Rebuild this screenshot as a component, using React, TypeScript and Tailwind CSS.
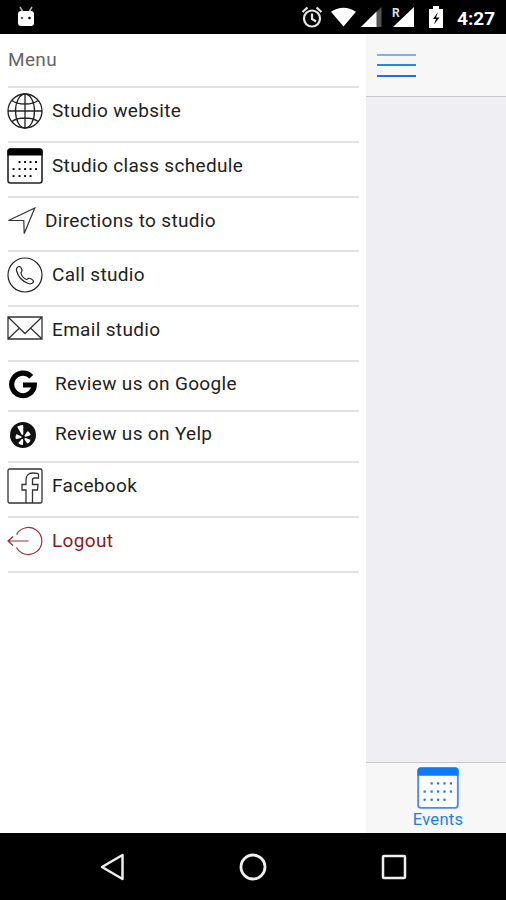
import React from "react";
import { FaYelp } from "react-icons/fa";

function GlobeIcon() {
  return (
    <svg width="36" height="36" viewBox="0 0 36 36" fill="none" stroke="#222" strokeWidth="1.3">
      <circle cx="18" cy="18" r="17" />
      <ellipse cx="18" cy="18" rx="9.5" ry="17" />
      <path d="M18 1v34M1 18h34M5 7.5c3 2.5 8 3.5 13 3.5s10-1 13-3.5M5 28.5c3-2.5 8-3.5 13-3.5s10 1 13 3.5" />
    </svg>
  );
}

const dots = [
  [12.5, 14], [18, 14], [23.5, 14], [29, 14],
  [6.5, 21], [12.5, 21], [18, 21], [23.5, 21], [29, 21],
  [6.5, 28], [12.5, 28], [18, 28], [23.5, 28],
];

function CalendarIcon({ size, color, border }: { size: number; color: string; border: string }) {
  return (
    <svg width={size} height={size} viewBox="0 0 36 36" fill="none">
      <rect x="1" y="1" width="34" height="34" rx="2.5" fill="#fff" stroke={border} strokeWidth="1.6" />
      <path d="M.5 7.5V3Q.5.5 3 .5h30q2.5 0 2.5 2.5v4.5z" fill={color} />
      {dots.map(([x, y]) => (
        <rect key={`${x}-${y}`} x={x - 0.9} y={y - 0.9} width="1.9" height="1.9" fill={color} />
      ))}
    </svg>
  );
}

function DirectionsIcon() {
  return (
    <svg width="29" height="28" viewBox="0 0 29 28" fill="none" stroke="#333" strokeWidth="1.2">
      <path d="M1.5 13.5L27.8 1 17.2 26.5l-.4-13z" />
    </svg>
  );
}

function PhoneIcon() {
  return (
    <svg width="36" height="36" viewBox="0 0 36 36" fill="none" stroke="#222" strokeWidth="1.2">
      <circle cx="18" cy="18" r="17" />
      <path d="M12 9.5c-1.5.3-3 2-2.5 4 1.5 6 6 11 12 13 2 .7 4.5 0 5-2 .2-1.5-3.5-3.5-5-3.2-1 .2-1 1.5-2 1.2-2.5-1-5-4-5.500-6.500-.2-1.200 1.400-1.300 1-3-.4-1.500-1.700-3.600-3-3.500z" />
    </svg>
  );
}

function MailIcon() {
  return (
    <svg width="36" height="24" viewBox="0 0 36 24" fill="none" stroke="#333" strokeWidth="1.3">
      <path d="M1 1h34v22H1zM1 1l17 16.5L35 1M1 23l11.500-11M35 23L23.500 12" />
    </svg>
  );
}

function GoogleIcon() {
  return (
    <svg width="30" height="30" viewBox="0 0 30 30" fill="none" stroke="#000" strokeWidth="5.2">
      <path d="M24.3 6.7A11.3 11.3 0 1 0 27.3 15H16" />
    </svg>
  );
}

function YelpIcon() {
  return (
    <span className="flex h-[26px] w-[26px] items-center justify-center rounded-full bg-[#111]">
      <FaYelp size={20} color="#fff" />
    </span>
  );
}

function FacebookIcon() {
  return (
    <svg width="36" height="36" viewBox="0 0 36 36" fill="none" stroke="#333" strokeWidth="1.3">
      <rect x="1" y="1" width="34" height="34" rx="1.5" />
      <path d="M19 35V22h-4v-5.500h4V12c0-4 2.500-7 6.500-7 2.500 0 6 0 6 1.500V10h-4c-1.500 0-2 .7-2 2v4.500h5.500L30.500 22h-5v13" />
    </svg>
  );
}

function LogoutIcon() {
  return (
    <svg width="36" height="30" viewBox="0 0 36 30" fill="none" stroke="#a02a2d" strokeWidth="1.2">
      <path d="M9.500 8.500a13.500 13.500 0 1 1 0 13M1 15h20.500M6 10.500L1 15l5 4.500" />
    </svg>
  );
}

const items = [
  { label: "Studio website", icon: <GlobeIcon />, row: "h-[55px]", slot: "w-[45px]", text: "" },
  { label: "Studio class schedule", icon: <CalendarIcon size={36} color="#000" border="#222" />, row: "h-[55px]", slot: "w-[45px]", text: "" },
  { label: "Directions to studio", icon: <DirectionsIcon />, row: "h-[54px]", slot: "w-[38px]", text: "" },
  { label: "Call studio", icon: <PhoneIcon />, row: "h-[55px]", slot: "w-[45px]", text: "pt-px" },
  { label: "Email studio", icon: <MailIcon />, row: "h-[55px]", slot: "w-[45px] pb-1", text: "" },
  { label: "Review us on Google", icon: <GoogleIcon />, row: "h-[50px]", slot: "w-12", text: "pb-0.5" },
  { label: "Review us on Yelp", icon: <YelpIcon />, row: "h-[51px]", slot: "w-12 pl-[3px]", text: "pb-0.5" },
  { label: "Facebook", icon: <FacebookIcon />, row: "h-[55px]", slot: "w-[45px]", text: "" },
  { label: "Logout", icon: <LogoutIcon />, row: "h-[55px]", slot: "w-[45px]", text: "text-[#8b1a1c]" },
];

function StatusBar() {
  return (
    <header className="flex h-[34px] shrink-0 items-center bg-black text-white">
      <svg className="ml-[17px]" width="18" height="22" viewBox="0 0 18 22" fill="#fff">
        <path d="M3 1l3 5M15 1l-3 5" stroke="#bbb" strokeWidth="1.5" />
        <path d="M1 8q0-3 3-3h10q3 0 3 3v9q0 3-3 3H4q-3 0-3-3z" />
        <circle cx="5" cy="12" r="1.3" fill="#666" />
        <circle cx="12.5" cy="12" r="1.3" fill="#000" />
      </svg>
      <svg className="ml-[266px]" width="22" height="22" viewBox="0 0 22 22" fill="none" stroke="#e8e8e8" strokeWidth="2.2">
        <circle cx="11" cy="12.5" r="8" />
        <path d="M1.500 6l5-4.500M20.500 6l-5-4.500M11 7.500v5.500l4 2.500" />
      </svg>
      <svg className="ml-[8px]" width="25" height="20" viewBox="0 0 26 20" fill="#fff">
        <path d="M0 4.500Q13-3.500 26 4.500L13 20z" />
      </svg>
      <svg className="ml-[5px]" width="22" height="20" viewBox="0 0 22 20">
        <path d="M0 20L20.500 0v20z" fill="#555" />
        <path d="M0 20L15.500 4.500v15.500z" fill="#fff" />
      </svg>
      <div className="relative ml-[9px] h-5 w-[22px]">
        <svg width="22" height="20" viewBox="0 0 22 20" fill="#fff">
          <path d="M1 20L22 0v20z" />
        </svg>
        <span className="absolute top-0 left-0 text-[12px] leading-[12px] font-bold text-[#ddd]">R</span>
      </div>
      <svg className="ml-[15px]" width="14" height="22" viewBox="0 0 14 22">
        <path d="M0 3h4V0h6v3h4v19H0z" fill="#fff" />
        <path d="M9 6l-5 7h3l-2 5.500 5.500-7H7z" fill="#000" />
      </svg>
      <span className="ml-[14px] pt-[4px] text-[19px] font-bold">4:27</span>
    </header>
  );
}

function SideMenu() {
  return (
    <nav className="w-[366px] bg-white px-2 text-[19px] tracking-[0.33px] text-[#222]">
      <h1 className="-mr-px h-[54px] border-b-2 border-[#e2e2e2] pt-3 text-[#666]">Menu</h1>
      <ul className="-mr-px">
        {items.map(({ label, icon, row, slot, text }) => (
          <li key={label} className={`${row} border-b-2 border-[#e2e2e2]`}>
            <a className="-ml-px flex h-[46px] items-center">
              <span className={`${slot} shrink-0`}>{icon}</span>
              <span className={text}>{label}</span>
            </a>
          </li>
        ))}
      </ul>
    </nav>
  );
}

export default function App() {
  return (
    <div className="flex h-[900px] w-[506px] flex-col overflow-hidden bg-black font-[Roboto,sans-serif]">
      <StatusBar />
      <div className="flex h-[799px]">
        <SideMenu />
        <main className="flex flex-1 flex-col bg-[#eeeef3]">
          <div className="h-[63px] border-b border-[#c8c8cc] bg-[#f7f7f7] pt-5 pl-[11px]">
            <div className="h-[2px] w-[39px] bg-[#8fa8ec]" />
            <div className="mt-[8px] h-[2px] w-[39px] bg-[#2585f0]" />
            <div className="mt-[9px] h-[2px] w-[39px] bg-[#1f6fe0]" />
          </div>
          <div className="flex-1" />
          <footer className="flex h-[71px] flex-col items-center border-t border-[#c8c8cc] bg-[#f7f7f7] pt-[4px] pl-1 text-[#1a7cf5]">
            <CalendarIcon size={42} color="#0a7aff" border="#4a8af5" />
            <span className="pt-px text-[16.5px] leading-[20px] tracking-[0.3px]">Events</span>
          </footer>
        </main>
      </div>
      <div className="flex h-[67px] items-center bg-black pl-[100px]">
        <svg width="25" height="28" viewBox="0 0 25 28" fill="none" stroke="#eee" strokeWidth="2.5">
          <path d="M2 14L22.500 2v24z" strokeLinejoin="round" />
        </svg>
        <svg className="ml-[114px]" width="28" height="28" viewBox="0 0 28 28" fill="none" stroke="#eee" strokeWidth="2.8">
          <circle cx="14" cy="14" r="12" />
        </svg>
        <svg className="ml-[114px]" width="26" height="26" viewBox="0 0 26 26" fill="none" stroke="#eee" strokeWidth="2.5">
          <rect x="2" y="2" width="22" height="22" rx="1" />
        </svg>
      </div>
    </div>
  );
}
